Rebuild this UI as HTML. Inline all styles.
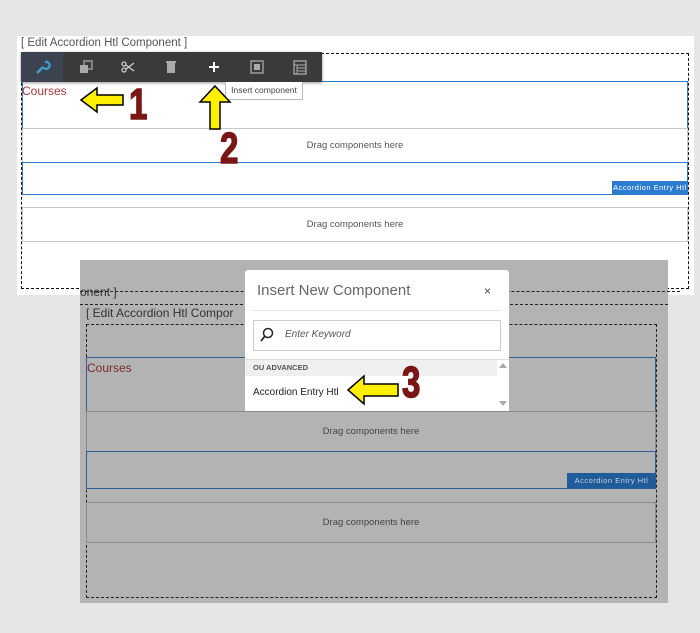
<!DOCTYPE html>
<html><head><style>
body{margin:0;width:700px;height:633px;background:#e6e6e6;position:relative;overflow:hidden;font-family:"Liberation Sans",sans-serif}
.a{position:absolute;box-sizing:border-box}
.dash{border:1.5px dashed #111}
.blue{border:1px solid #2b7bd0}
.row{border:1px solid #c8c8c8;font-size:9.5px;color:#555;text-align:center}
.lbl{background:#2b7bd0;color:#fff;font-size:7.5px;letter-spacing:.5px;text-align:center;line-height:13px}
.num{font-family:"Liberation Sans Narrow","Liberation Sans",sans-serif;font-weight:bold;color:#7a1616;font-size:44px;transform:scaleX(.75);transform-origin:left top;line-height:1;-webkit-text-stroke:1.5px #7a1616}
</style></head><body>
<!-- top panel -->
<div class="a" style="left:17px;top:36px;width:677px;height:259px;background:#fff"></div>
<div class="a" style="left:21px;top:37px;font-size:11.5px;color:#555">[ Edit Accordion Htl Component ]</div>
<div class="a dash" style="left:21px;top:53px;width:668px;height:236px"></div>
<div class="a blue" style="left:22px;top:81px;width:666px;height:48px"></div>
<div class="a" style="left:22px;top:84px;font-size:12px;color:#a23a3a">Courses</div>
<div class="a row" style="left:22px;top:128px;width:666px;height:35px;line-height:33px">Drag components here</div>
<div class="a blue" style="left:22px;top:162px;width:666px;height:33px"></div>
<div class="a lbl" style="left:612px;top:181px;width:76px;height:13px">Accordion Entry Htl</div>
<div class="a row" style="left:22px;top:207px;width:666px;height:35px;line-height:33px">Drag components here</div>
<!-- toolbar -->
<div class="a" style="left:21px;top:52px;width:301px;height:30px;background:#3a3a3a;box-shadow:0 1px 3px rgba(0,0,0,.4)"></div>
<div class="a" style="left:21px;top:52px;width:42px;height:30px;background:#3d4250"></div>
<svg class="a" style="left:0;top:0" width="330" height="90">
<path d="M37 73 L43 67 M43 67 a3.5 3.5 0 1 0 2 -5" stroke="#3aa0c8" stroke-width="2.4" fill="none"/>
<rect x="84" y="61" width="8" height="8" fill="none" stroke="#aaa" stroke-width="1.3"/><rect x="80" y="65" width="8" height="8" fill="#aaa"/>
<circle cx="124" cy="70" r="2" fill="none" stroke="#ccc" stroke-width="1.3"/><circle cx="124" cy="64" r="2" fill="none" stroke="#ccc" stroke-width="1.3"/><path d="M126 69 L134 63 M126 65 L134 71" stroke="#ccc" stroke-width="1.3"/>
<rect x="166" y="61" width="10" height="2" fill="#aaa"/><rect x="167" y="63" width="8" height="10" fill="#aaa"/>
<path d="M214 62 V72 M209 67 H219" stroke="#fff" stroke-width="2"/>
<rect x="251" y="61" width="12" height="12" fill="none" stroke="#aaa" stroke-width="1.3"/><rect x="254" y="64" width="6" height="6" fill="#aaa"/>
<rect x="294" y="61" width="12" height="13" fill="none" stroke="#aaa" stroke-width="1.3"/><path d="M294 65 H306 M297 65 V74 M297 68 H306 M297 71 H306" stroke="#aaa"/>
</svg>
<div class="a" style="left:225px;top:82px;width:78px;height:18px;background:#fff;border:1px solid #bbb;border-top:none;font-size:8.5px;color:#444;line-height:17px;text-align:center">Insert component</div>
<!-- arrows & numbers -->
<svg class="a" style="left:0;top:0" width="700" height="200">
<path d="M81 100 L97 88 L97 95 L123 95 L123 105 L97 105 L97 112 Z" fill="#ffef00" stroke="#000" stroke-width="1.5"/>
<path d="M215 86 L230 102 L220 102 L220 129 L210 129 L210 102 L200 102 Z" fill="#ffef00" stroke="#000" stroke-width="1.5"/>
</svg>
<div class="a num" style="left:129px;top:83px">1</div>
<div class="a num" style="left:220px;top:127px">2</div>
<!-- gray panel -->
<div class="a" style="left:80px;top:260px;width:588px;height:343px;background:#b3b3b3"></div>
<div class="a" style="left:80px;top:291px;width:600px;border-top:1.5px dashed #222"></div>
<div class="a" style="left:80px;top:285px;font-size:12px;color:#333">onent ]</div>
<div class="a" style="left:80px;top:304px;width:588px;border-top:1.5px dashed #222"></div>
<div class="a" style="left:86px;top:306px;font-size:12px;color:#333">[ Edit Accordion Htl Compor</div>
<div class="a dash" style="left:86px;top:324px;width:571px;height:274px;border-color:#222"></div>
<div class="a blue" style="left:86px;top:357px;width:570px;height:55px;border-color:#2d5f95"></div>
<div class="a" style="left:87px;top:361px;font-size:12px;color:#7a2a2a">Courses</div>
<div class="a row" style="left:86px;top:411px;width:570px;height:41px;line-height:40px;border-color:#8a8a8a;color:#444">Drag components here</div>
<div class="a blue" style="left:86px;top:451px;width:570px;height:38px;border-color:#2d5f95"></div>
<div class="a lbl" style="left:567px;top:473px;width:89px;height:15px;line-height:15px;background:#1f5c99;color:#ccd">Accordion Entry Htl</div>
<div class="a row" style="left:86px;top:502px;width:570px;height:41px;line-height:40px;border-color:#8a8a8a;color:#444">Drag components here</div>
<!-- dialog -->
<div class="a" style="left:245px;top:270px;width:264px;height:141px;background:#fff;border-radius:3px 3px 0 0"></div>
<div class="a" style="left:257px;top:282px;font-size:15px;color:#666">Insert New Component</div>
<div class="a" style="left:484px;top:284px;font-size:12px;color:#444">×</div>
<div class="a" style="left:253px;top:310px;width:248px;border-top:1px solid #e5e5e5"></div>
<div class="a" style="left:253px;top:320px;width:248px;height:31px;border:1px solid #ccc"></div>
<svg class="a" style="left:259px;top:327px" width="16" height="16"><circle cx="9" cy="6" r="4.5" fill="none" stroke="#222" stroke-width="1.5"/><path d="M6 9 L2 14" stroke="#222" stroke-width="1.8"/></svg>
<div class="a" style="left:285px;top:329px;font-size:10px;font-style:italic;color:#555">Enter Keyword</div>
<div class="a" style="left:245px;top:359px;width:264px;border-top:1px solid #ddd"></div>
<div class="a" style="left:245px;top:360px;width:252px;height:16px;background:#efefef;font-size:7.5px;font-weight:bold;color:#555;line-height:16px;padding-left:8px">OU ADVANCED</div>
<div class="a" style="left:253px;top:387px;font-size:10px;color:#222">Accordion Entry Htl</div>
<div class="a" style="left:499px;top:363px;width:0;height:0;border:4px solid transparent;border-bottom:5px solid #aaa;border-top:none"></div>
<div class="a" style="left:499px;top:401px;width:0;height:0;border:4px solid transparent;border-top:5px solid #aaa;border-bottom:none"></div>
<svg class="a" style="left:0;top:350px" width="700" height="70">
<path d="M348 40 L364 26 L364 34 L398 34 L398 46 L364 46 L364 54 Z" fill="#ffef00" stroke="#000" stroke-width="1.5"/>
</svg>
<div class="a num" style="left:402px;top:361px">3</div>
</body></html>
